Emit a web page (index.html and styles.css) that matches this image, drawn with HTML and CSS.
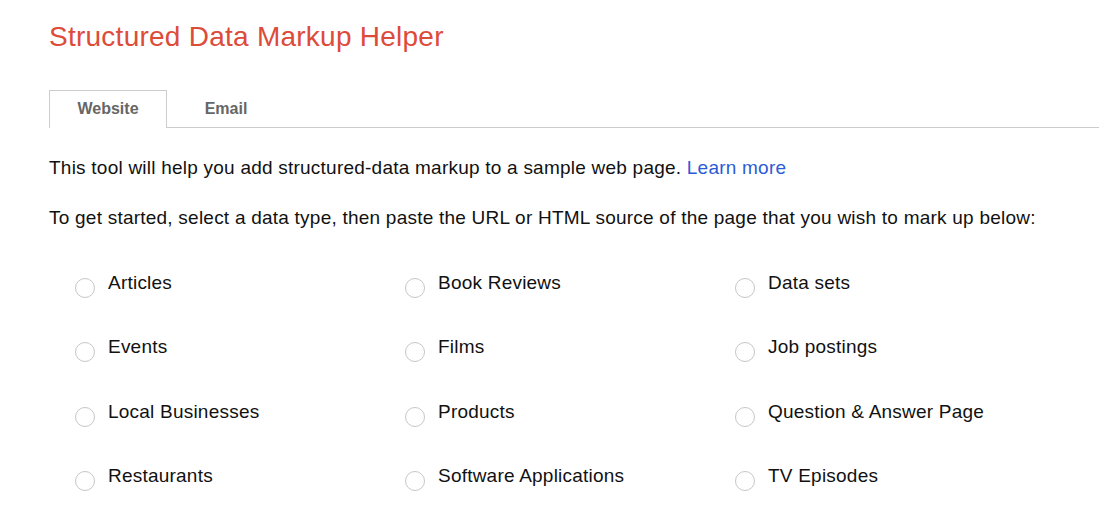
FILE: index.html
```html
<!DOCTYPE html>
<html>
<head>
<meta charset="utf-8">
<link rel="stylesheet" href="styles.css">
</head>
<body>
<div class="page">
  <h1 class="title">Structured Data Markup Helper</h1>
  <div class="tabs">
    <div class="tab active">Website</div>
    <div class="tab">Email</div>
  </div>
  <p class="intro first">This tool will help you add structured-data markup to a sample web page. <a class="link" href="#">Learn more</a></p>
  <p class="intro">To get started, select a data type, then paste the URL or HTML source of the page that you wish to mark up below:</p>
  <div class="types">
    <label class="type"><span class="radio"></span><span class="name">Articles</span></label>
    <label class="type"><span class="radio"></span><span class="name">Book Reviews</span></label>
    <label class="type"><span class="radio"></span><span class="name">Data sets</span></label>
    <label class="type"><span class="radio"></span><span class="name">Events</span></label>
    <label class="type"><span class="radio"></span><span class="name">Films</span></label>
    <label class="type"><span class="radio"></span><span class="name">Job postings</span></label>
    <label class="type"><span class="radio"></span><span class="name">Local Businesses</span></label>
    <label class="type"><span class="radio"></span><span class="name">Products</span></label>
    <label class="type"><span class="radio"></span><span class="name">Question &amp; Answer Page</span></label>
    <label class="type"><span class="radio"></span><span class="name">Restaurants</span></label>
    <label class="type"><span class="radio"></span><span class="name">Software Applications</span></label>
    <label class="type"><span class="radio"></span><span class="name">TV Episodes</span></label>
  </div>
</div>
</body>
</html>
```

FILE: styles.css
```css
html, body {
  margin: 0;
  padding: 0;
  background: #fff;
}
body {
  font-family: "Liberation Sans", Arial, sans-serif;
  color: #222;
}
.page {
  padding: 21px 17px 0 49px;
}
.title {
  margin: 0;
  font-size: 28px;
  line-height: 32px;
  letter-spacing: 0.25px;
  font-weight: normal;
  color: #dd4b39;
}
.tabs {
  margin-top: 37px;
  display: flex;
  border-bottom: 1px solid #cccccc;
}
.tab {
  width: 118px;
  box-sizing: border-box;
  height: 37px;
  line-height: 36px;
  text-align: center;
  font-size: 16px;
  font-weight: bold;
  color: #666;
  border: 1px solid transparent;
  border-bottom: none;
}
.tab.active {
  border-color: #cccccc;
  background: #fff;
  margin-bottom: -1px;
  height: 38px;
}
.intro {
  margin: 29px 0 0 0;
  font-size: 19px;
  letter-spacing: 0.23px;
  line-height: 22px;
  color: #111;
}
.intro + .intro {
  margin-top: 28px;
}
.link {
  color: #2c5bd6;
  text-decoration: none;
}
.types {
  margin: 43px 0 0 26px;
  display: grid;
  grid-template-columns: repeat(3, 330px);
  grid-auto-rows: 64.3px;
}
.type {
  display: flex;
  align-items: flex-start;
  font-size: 19px;
  letter-spacing: 0.22px;
  line-height: 22px;
  color: #111;
}
.radio {
  width: 20px;
  height: 20px;
  box-sizing: border-box;
  border: 1px solid #c6c6c6;
  border-radius: 50%;
  margin-top: 6px;
  margin-right: 13px;
  flex: none;
}
```
